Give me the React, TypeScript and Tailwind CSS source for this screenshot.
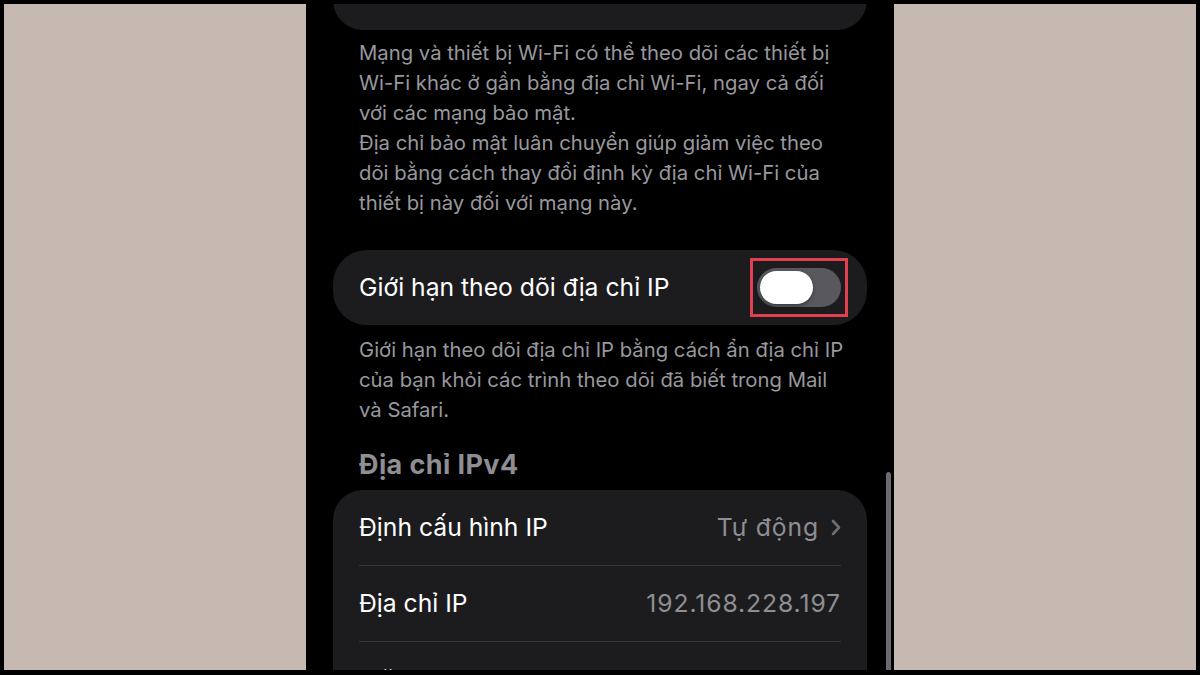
import React from "react";

const font = { fontFamily: "Inter, 'Noto Sans', 'Liberation Sans', sans-serif" };

function Row({ label, value, chevron, last }: { label: string; value: string; chevron?: boolean; last?: boolean }) {
  return (
    <div className="px-[26px]">
      <div className={`flex h-[76px] items-center ${last ? "" : "border-b border-[#38383a]"}`}>
        <span className="text-[24.7px] text-white">{label}</span>
        <div className="ml-auto flex items-center gap-[12px]">
          <span className="text-[24.7px] text-[#8e8e93] tracking-[0.9px]">{value}</span>
          {chevron && (
            <svg width="10" height="17" viewBox="0 0 10 17" fill="none">
              <path d="M2 2l6 6.5L2 15" stroke="#6e6e73" strokeWidth="2.6" strokeLinecap="round" strokeLinejoin="round" />
            </svg>
          )}
        </div>
      </div>
    </div>
  );
}

export default function App() {
  return (
    <div className="w-[1200px] h-[675px] bg-black pt-[4px] pl-[4px] pr-[4px] pb-[5px]" style={font}>
      <div className="h-full w-full bg-[#c5b9b1] flex justify-center overflow-hidden">
        <div className="relative w-[588px] h-full bg-black overflow-hidden">
          <div className="px-[27px]">
            {/* previous group, scrolled mostly out of view */}
            <div className="mt-[-40px] h-[66px] rounded-[30px] bg-[#1c1c1e]" />

            <p className="mt-[8px] pl-[26px] pr-[20px] text-[20.3px] leading-[30px] text-[#98989e]">
              Mạng và thiết bị Wi-Fi có thể theo dõi các thiết bị Wi-Fi khác ở gần bằng địa chỉ Wi-Fi, ngay cả đối với các mạng bảo mật.
              <br />
              Địa chỉ bảo mật luân chuyển giúp giảm việc theo dõi bằng cách thay đổi định kỳ địa chỉ Wi-Fi của thiết bị này đối với mạng này.
            </p>

            <div className="mt-[32px] h-[75px] rounded-[34px] bg-[#1c1c1e] flex items-center pl-[26px] pr-[26px]">
              <span className="text-[24.7px] text-white">Giới hạn theo dõi địa chỉ IP</span>
              <div className="relative ml-auto">
                <div className="w-[84px] h-[39px] rounded-full bg-[#58585d] p-[3px] flex items-center">
                  <div className="w-[53px] h-[33px] rounded-full bg-white shadow-[0_2px_4px_rgba(0,0,0,0.3)]" />
                </div>
                <div className="absolute left-[-7px] top-[-10px] w-[98px] h-[59px] border-[3px] border-[#e0404f]" />
              </div>
            </div>

            <p className="mt-[10px] pl-[26px] pr-[20px] text-[20.3px] leading-[30px] text-[#98989e]">
              Giới hạn theo dõi địa chỉ IP bằng cách ẩn địa chỉ IP của bạn khỏi các trình theo dõi đã biết trong Mail và Safari.
            </p>

            <h3 className="mt-[25px] px-[26px] text-[27px] leading-[30px] font-bold tracking-[0.4px] text-[#8e8e93]">Địa chỉ IPv4</h3>

            <div className="mt-[10px] rounded-[30px] bg-[#1c1c1e]">
              <Row label="Định cấu hình IP" value="Tự động" chevron />
              <Row label="Địa chỉ IP" value="192.168.228.197" />
              <Row label="Mặt nạ mạng con" value="255.255.240.0" last />
            </div>
          </div>

          {/* scroll indicator */}
          <div className="absolute left-[580px] top-[468px] w-[5px] h-[260px] rounded-full bg-[#6b6b6f]" />
        </div>
      </div>
    </div>
  );
}
